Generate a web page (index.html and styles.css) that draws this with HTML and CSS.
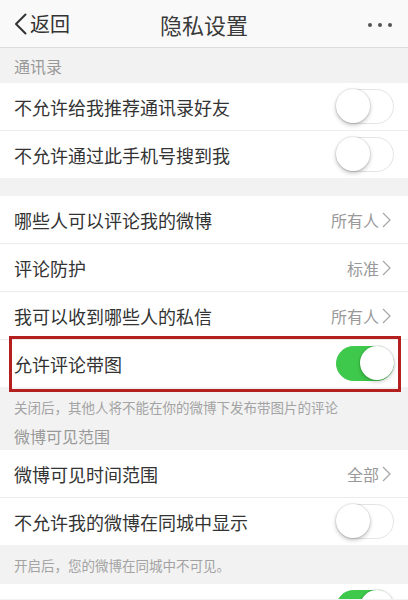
FILE: index.html
```html
<!DOCTYPE html>
<html lang="zh-CN">
<head>
    <meta charset="UTF-8">
    <meta name="viewport" content="width=device-width, initial-scale=1.0">
    <title>隐私设置</title>
    <link rel="stylesheet" href="styles.css">
</head>
<body>

    <div class="nav-bar">
        <div class="nav-back">
            <svg class="back-icon" viewBox="0 0 13 22" width="13" height="22">
                <path d="M11.5 1.5 L2 11 L11.5 20.5" fill="none" stroke="#333" stroke-width="2" stroke-linecap="round" stroke-linejoin="round"/>
            </svg>
            <span>返回</span>
        </div>
        <h1 class="nav-title">隐私设置</h1>
        <div class="nav-more">
            <span class="dot"></span><span class="dot"></span><span class="dot"></span>
        </div>
    </div>

    <div class="section-label">通讯录</div>
    <div class="group">
        <div class="row">
            <span class="row-text">不允许给我推荐通讯录好友</span>
            <span class="switch"></span>
        </div>
        <div class="row">
            <span class="row-text">不允许通过此手机号搜到我</span>
            <span class="switch"></span>
        </div>
    </div>

    <div class="gap"></div>

    <div class="group">
        <div class="row">
            <span class="row-text">哪些人可以评论我的微博</span>
            <span class="row-value">所有人<svg class="chevron" viewBox="0 0 9 16" width="9" height="16"><path d="M1 1 L8 8 L1 15" fill="none" stroke="#a8a8a8" stroke-width="1.3"/></svg></span>
        </div>
        <div class="row">
            <span class="row-text">评论防护</span>
            <span class="row-value">标准<svg class="chevron" viewBox="0 0 9 16" width="9" height="16"><path d="M1 1 L8 8 L1 15" fill="none" stroke="#a8a8a8" stroke-width="1.3"/></svg></span>
        </div>
        <div class="row">
            <span class="row-text">我可以收到哪些人的私信</span>
            <span class="row-value">所有人<svg class="chevron" viewBox="0 0 9 16" width="9" height="16"><path d="M1 1 L8 8 L1 15" fill="none" stroke="#a8a8a8" stroke-width="1.3"/></svg></span>
        </div>
        <div class="row row-marked">
            <span class="row-text">允许评论带图</span>
            <span class="switch on"></span>
        </div>
    </div>

    <div class="hint">关闭后，其他人将不能在你的微博下发布带图片的评论</div>
    <div class="section-label section-label-tight">微博可见范围</div>

    <div class="group">
        <div class="row">
            <span class="row-text">微博可见时间范围</span>
            <span class="row-value">全部<svg class="chevron" viewBox="0 0 9 16" width="9" height="16"><path d="M1 1 L8 8 L1 15" fill="none" stroke="#a8a8a8" stroke-width="1.3"/></svg></span>
        </div>
        <div class="row">
            <span class="row-text">不允许我的微博在同城中显示</span>
            <span class="switch"></span>
        </div>
    </div>

    <div class="hint hint-tall">开启后，您的微博在同城中不可见。</div>

    <div class="group group-last">
        <div class="row">
            <span class="row-text"></span>
            <span class="switch on"></span>
        </div>
    </div>

</body>
</html>
```

FILE: styles.css
```css
/* Reset styles */
* {
    margin: 0;
    padding: 0;
    box-sizing: border-box;
}

body {
    font-family: "Noto Sans CJK SC", "Noto Sans", sans-serif;
    background-color: #f2f2f2;
    color: #333;
    width: 408px;
    height: 600px;
    overflow: hidden;
}

/* Navigation bar */
.nav-bar {
    height: 48px;
    background-color: #f9f9f9;
    border-bottom: 1px solid #dcdcdc;
    display: flex;
    align-items: center;
    justify-content: space-between;
    padding: 0 16px 0 14px;
    position: relative;
}

.nav-back {
    display: flex;
    align-items: center;
    gap: 3px;
    font-size: 20px;
    color: #333;
}

.back-icon {
    display: block;
}

.nav-title {
    position: absolute;
    left: 0;
    right: 0;
    text-align: center;
    font-size: 22px;
    font-weight: normal;
    color: #3a3a3a;
    pointer-events: none;
}

.nav-more {
    display: flex;
    gap: 6px;
    padding-top: 2px;
}

.dot {
    width: 4px;
    height: 4px;
    border-radius: 50%;
    background-color: #555;
}

/* Section labels and hints */
.section-label {
    height: 35px;
    padding: 0 14px;
    display: flex;
    align-items: center;
    font-size: 16px;
    color: #999;
}

.section-label-tight {
    height: 29px;
    align-items: flex-start;
    padding-top: 3px;
}

.hint {
    padding: 5px 14px 0;
    height: 34px;
    display: flex;
    align-items: center;
    font-size: 13.5px;
    color: #a3a3a3;
}

.hint-tall {
    height: 39px;
    padding-top: 0;
}

.gap {
    height: 18px;
}

/* Rows */
.group {
    background-color: #fff;
}

.group-last {
    height: 15px;
    overflow: hidden;
}

.row {
    height: 48px;
    padding: 0 14px;
    display: flex;
    align-items: center;
    justify-content: space-between;
    border-bottom: 1px solid #ececec;
    position: relative;
}

.row:last-child {
    border-bottom: none;
    height: 47px;
}

.row-text {
    font-size: 18px;
    color: #333;
}

.row-value {
    display: flex;
    align-items: center;
    gap: 3px;
    font-size: 16px;
    color: #999;
    padding-right: 3px;
}

.chevron {
    display: block;
}

/* Highlight frame around a row */
.row-marked::after {
    content: "";
    position: absolute;
    left: 9px;
    right: 7px;
    top: -4px;
    bottom: -5px;
    border: 3px solid #b3201f;
    pointer-events: none;
}

/* Switches */
.switch {
    width: 58px;
    height: 35px;
    border-radius: 18px;
    border: 1.5px solid #e4e4e4;
    background-color: #fff;
    position: relative;
}

.switch::before {
    content: "";
    position: absolute;
    left: -1px;
    top: -1px;
    width: 34px;
    height: 34px;
    border-radius: 50%;
    background-color: #fff;
    box-shadow: 0 2px 4px rgba(0, 0, 0, 0.25), 0 0 0 1px rgba(0, 0, 0, 0.06);
}

.switch.on {
    background-color: #3ec94c;
    border-color: #3ec94c;
}

.switch.on::before {
    left: auto;
    right: -1px;
    box-shadow: 0 2px 4px rgba(0, 0, 0, 0.2), 0 0 0 1px rgba(0, 0, 0, 0.08);
}
```
